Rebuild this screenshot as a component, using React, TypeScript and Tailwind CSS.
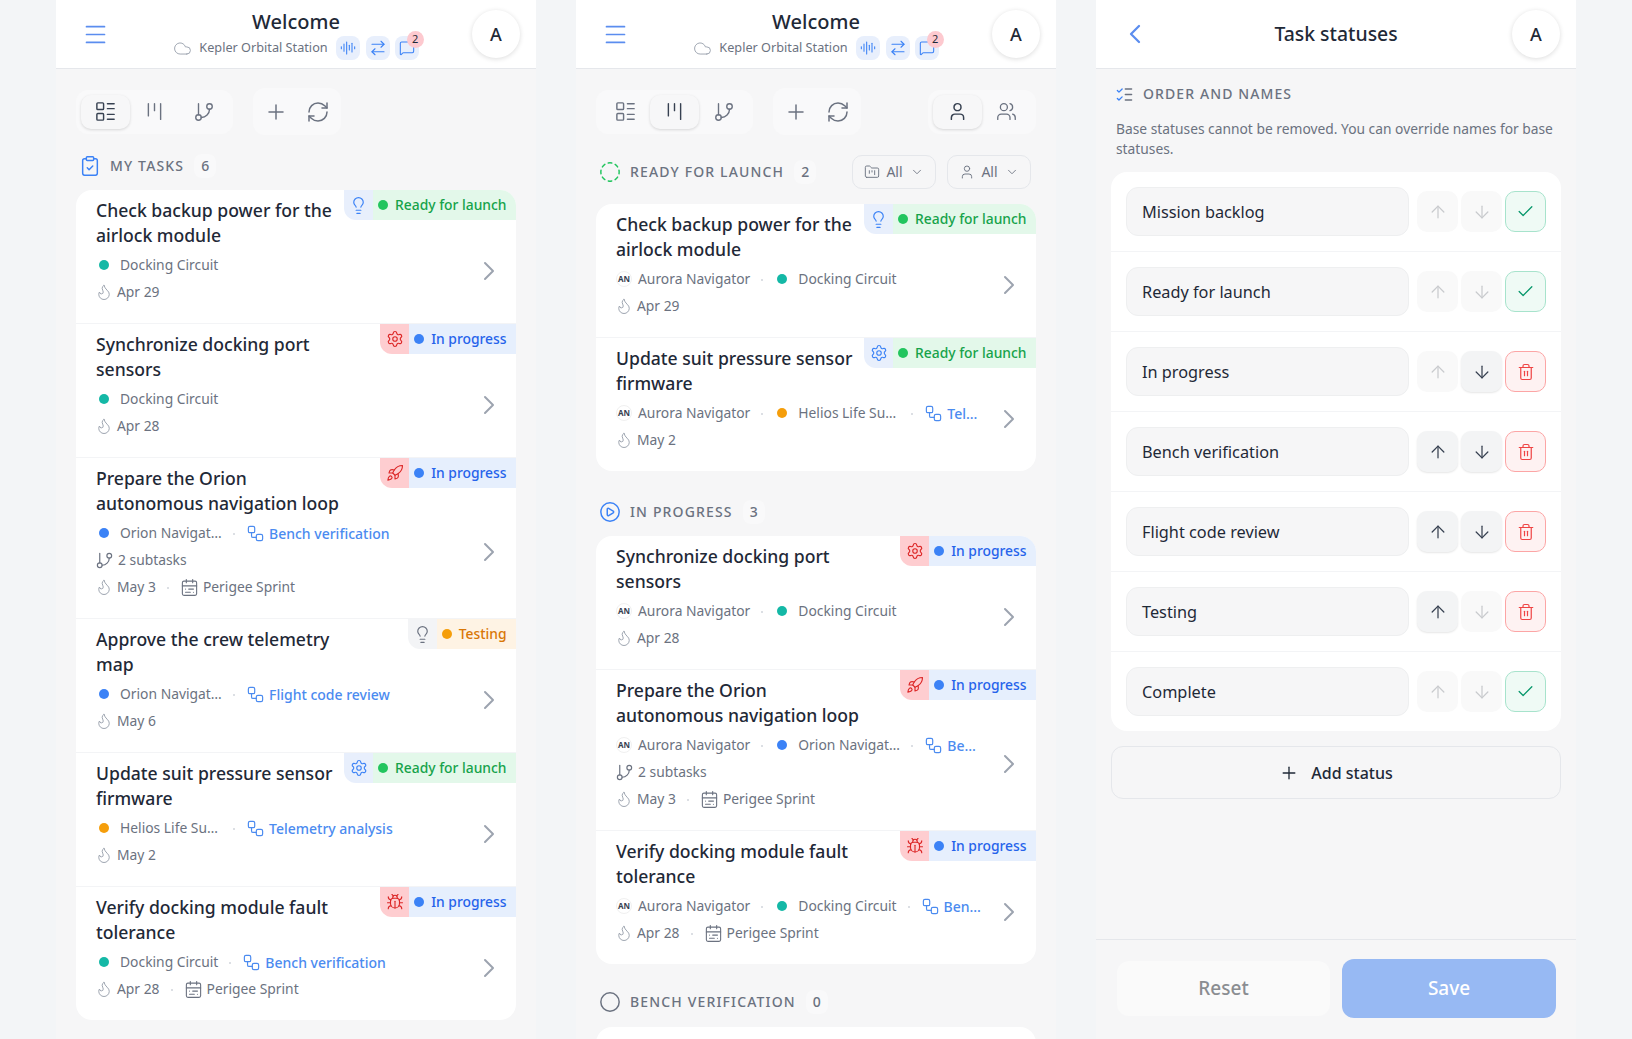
import React from "react";
import {
  ArrowDown, ArrowRightLeft, ArrowUp, AudioLines, Bug, CalendarRange, Check, ChevronDown, ChevronLeft, ChevronRight,
  Circle, CircleDashed, CirclePlay, ClipboardCheck, Cloud, Flame, FolderKanban, GitBranch, Kanban, LayoutList, Lightbulb,
  Menu, MessageSquare, Plus, RefreshCw, Rocket, Settings, Trash2, User, Users, Workflow,
} from "lucide-react";

type Tone = "ready" | "progress" | "testing";
type IconTone = "blue" | "red" | "gray";
type Task = {
  title: string; tone: Tone; icon: React.ElementType; iconTone: IconTone;
  owner?: boolean; dot?: string; project?: string; stage?: string; subtasks?: boolean; date: string; sprint?: boolean;
};

const TEAL = "bg-[#14b8a6]", BLUE = "bg-[#3b82f6]", ORANGE = "bg-[#f59e0b]";

function Dot({ c }: { c: string }) {
  return <span className="flex w-4 shrink-0 justify-center"><span className={`block h-[10px] w-[10px] rounded-full ${c}`} /></span>;
}

function Sep() {
  return <span className="mx-[11px] h-[2px] w-[2px] shrink-0 rounded-full bg-[#d1d5db]" />;
}

function Badge({ t }: { t: Task }) {
  const s = {
    ready: { bg: "bg-[#e3f8ea]", dot: "bg-[#22c55e]", text: "text-[#16a34a]", label: "Ready for launch" },
    progress: { bg: "bg-[#e6effd]", dot: "bg-[#3b82f6]", text: "text-[#2563eb]", label: "In progress" },
    testing: { bg: "bg-[#fef3e4]", dot: "bg-[#f59e0b]", text: "text-[#d97706]", label: "Testing" },
  }[t.tone];
  const i = {
    blue: "bg-[#e8effc] text-[#3b82f6]",
    red: "bg-[#fecdd0] text-[#dc2626]",
    gray: "bg-[#f3f4f6] text-[#6b7280]",
  }[t.iconTone];
  const Icon = t.icon;
  return (
    <div className="absolute right-0 top-0 flex h-[30px] items-center overflow-hidden rounded-bl-xl text-[13.85px] font-medium">
      <span className={`flex h-full w-[29px] items-center justify-center ${i}`}><Icon size={t.icon === Lightbulb ? 19 : 18} strokeWidth={1.5} /></span>
      <span className={`flex h-full items-center gap-[7px] pl-[5px] pr-[9.5px] ${s.bg} ${s.text}`}>
        <span className={`h-[10px] w-[10px] rounded-full ${s.dot}`} />
        {s.label}
      </span>
    </div>
  );
}

function Row({ t, first, last }: { t: Task; first?: boolean; last?: boolean }) {
  const Stage = t.stage ? (
    <span className="flex shrink-0 items-center gap-[4px] text-sm font-medium text-[#4b8bf0]"><Workflow size={19} strokeWidth={1.5} />{t.stage}</span>
  ) : null;
  const cut = t.project?.endsWith("…");
  return (
    <div className={`relative flex items-center overflow-hidden bg-white pl-5 pr-[11px] ${first ? "rounded-t-2xl" : "border-t border-[#f3f4f6]"} ${last ? "rounded-b-2xl" : ""}`}>
      <Badge t={t} />
      <div className="min-w-0 flex-1 pb-[17px] pt-2">
        <div className="w-[250px] text-[17.6px] font-medium leading-[25px] text-[#1f2937]">{t.title}</div>
        <div className="mt-1 flex h-[27px] items-center whitespace-nowrap text-[13.85px] text-[#6b7280]">
          {t.owner && (
            <>
              <span className="flex items-center gap-[6px]">
                <span className="flex h-4 w-4 items-center justify-center rounded-full border border-[#f0f0f0] text-[8px] font-bold text-[#374151]">AN</span>
                Aurora Navigator
              </span>
              <Sep />
            </>
          )}
          {t.dot && t.project && (
            <span className="flex shrink-0 items-center gap-2"><Dot c={t.dot} /><span className={cut ? "min-w-[102px]" : ""}>{t.project}</span></span>
          )}
          {t.stage && <><Sep />{Stage}</>}
        </div>
        {t.subtasks && (
          <div className="-ml-[1px] flex h-[27px] items-center gap-[4px] text-[13.85px] text-[#6b7280]">
            <GitBranch size={19} strokeWidth={1.5} />2 subtasks
          </div>
        )}
        <div className="-ml-[1px] flex h-[27px] items-center text-[13.85px] text-[#6b7280]">
          <span className="flex items-center gap-[4px]"><Flame size={18} strokeWidth={1.3} className="text-[#9ca3af]" />{t.date}</span>
          {t.sprint && (
            <>
              <Sep />
              <span className="flex items-center gap-[4px]"><CalendarRange size={19} strokeWidth={1.4} />Perigee Sprint</span>
            </>
          )}
        </div>
      </div>
      <ChevronRight size={32} strokeWidth={1.5} className="mt-[28px] shrink-0 text-[#9ca3af]" />
    </div>
  );
}

function Avatar() {
  return (
    <div className="flex h-12 w-12 shrink-0 items-center justify-center rounded-full bg-white text-lg font-medium text-[#1f2937] shadow-[0_1px_5px_rgba(0,0,0,0.14)]">A</div>
  );
}

function Header() {
  return (
    <header className="flex h-[69px] shrink-0 items-center border-b border-[#e5e7eb] bg-white pl-[26px] pr-4">
      <span className="w-[38px] shrink-0"><Menu size={27} strokeWidth={1.5} className="text-[#5b8def]" /></span>
      <div className="flex flex-1 flex-col items-center pt-[2px]">
        <div className="text-xl font-medium leading-[26px] text-[#1f2937]">Welcome</div>
        <div className="flex h-[26px] items-center text-[12.7px] text-[#6b7280]">
          <Cloud size={19} strokeWidth={1.2} className="mr-[7px] text-[#9ca3af]" />
          Kepler Orbital Station
          <span className="ml-2 flex h-6 w-6 items-center justify-center rounded-lg bg-[#e8effc] text-[#3b82f6]"><AudioLines size={16} strokeWidth={1.6} /></span>
          <span className="ml-[6px] flex h-6 w-6 items-center justify-center rounded-lg bg-[#e8effc] text-[#3b82f6]"><ArrowRightLeft size={18} strokeWidth={1.5} /></span>
          <span className="relative ml-[5px] flex h-6 w-6 items-center justify-center rounded-lg bg-[#e8effc] text-[#3b82f6]">
            <MessageSquare size={16} strokeWidth={1.6} />
            <span className="absolute -right-[5px] -top-[5px] flex h-[17px] w-[17px] items-center justify-center rounded-full bg-[#fdc9cf] text-[11px] text-[#1f2937]">2</span>
          </span>
        </div>
      </div>
      <Avatar />
    </header>
  );
}

function Tab({ active, children }: { active?: boolean; children: React.ReactNode }) {
  return (
    <span className={`flex h-[34px] w-[49px] items-center justify-center rounded-[10px] ${active ? "bg-[#f7f7f8] text-[#374151] shadow-[0_1px_3px_rgba(0,0,0,0.14)]" : "text-[#6b7280]"}`}>{children}</span>
  );
}

function Toolbar({ tab, people }: { tab: number; people?: boolean }) {
  return (
    <div className="mt-[19px] flex shrink-0 items-center px-5">
      <div className="flex h-11 items-center rounded-xl bg-[#f9f9fa] px-[5px]">
        <Tab active={tab === 0}><LayoutList size={23} strokeWidth={1.5} /></Tab>
        <Tab active={tab === 1}><Kanban size={21} strokeWidth={1.6} /></Tab>
        <Tab><GitBranch size={22} strokeWidth={1.5} /></Tab>
      </div>
      <div className="ml-5 flex h-[47px] w-[88px] items-center justify-center gap-[18px] rounded-xl bg-[#f9f9fa] text-[#6b7280]">
        <Plus size={24} strokeWidth={1.5} />
        <RefreshCw size={24} strokeWidth={1.5} />
      </div>
      {people && (
        <div className="ml-auto flex h-11 items-center rounded-xl bg-[#f9f9fa] px-[5px]">
          <Tab active><User size={21} strokeWidth={1.7} /></Tab>
          <Tab><Users size={21} strokeWidth={1.5} /></Tab>
        </div>
      )}
    </div>
  );
}

function SectionTitle({ icon, label, n, children }: { icon: React.ReactNode; label: string; n: number; children?: React.ReactNode }) {
  return (
    <div className="flex items-center pl-[3px]">
      {icon}
      <span className="ml-[9px] text-sm font-medium uppercase tracking-[1.15px] text-[#6b7280]">{label}</span>
      <span className="ml-[10px] flex h-6 w-[22px] items-center justify-center rounded-lg bg-[#f9f9fa] text-sm font-medium text-[#6b7280]">{n}</span>
      {children}
    </div>
  );
}

function Filter({ icon }: { icon: React.ReactNode }) {
  return (
    <span className="flex h-[34px] w-[84px] items-center justify-center rounded-[10px] border border-[#e5e7eb] text-sm text-[#6b7280]">
      {icon}
      <span className="ml-[6px]">All</span>
      <ChevronDown size={14} strokeWidth={1.5} className="ml-[7px]" />
    </span>
  );
}

const FIRST: Task[] = [
  { title: "Check backup power for the airlock module", tone: "ready", icon: Lightbulb, iconTone: "blue", dot: TEAL, project: "Docking Circuit", date: "Apr 29" },
  { title: "Synchronize docking port sensors", tone: "progress", icon: Settings, iconTone: "red", dot: TEAL, project: "Docking Circuit", date: "Apr 28" },
  { title: "Prepare the Orion autonomous navigation loop", tone: "progress", icon: Rocket, iconTone: "red", dot: BLUE, project: "Orion Navigat…", stage: "Bench verification", subtasks: true, date: "May 3", sprint: true },
  { title: "Approve the crew telemetry map", tone: "testing", icon: Lightbulb, iconTone: "gray", dot: BLUE, project: "Orion Navigat…", stage: "Flight code review", date: "May 6" },
  { title: "Update suit pressure sensor firmware", tone: "ready", icon: Settings, iconTone: "blue", dot: ORANGE, project: "Helios Life Su…", stage: "Telemetry analysis", date: "May 2" },
  { title: "Verify docking module fault tolerance", tone: "progress", icon: Bug, iconTone: "red", dot: TEAL, project: "Docking Circuit", stage: "Bench verification", date: "Apr 28", sprint: true },
];

const READY: Task[] = [
  { title: "Check backup power for the airlock module", tone: "ready", icon: Lightbulb, iconTone: "blue", owner: true, dot: TEAL, project: "Docking Circuit", date: "Apr 29" },
  { title: "Update suit pressure sensor firmware", tone: "ready", icon: Settings, iconTone: "blue", owner: true, dot: ORANGE, project: "Helios Life Su…", stage: "Tel…", date: "May 2" },
];

const PROGRESS: Task[] = [
  { title: "Synchronize docking port sensors", tone: "progress", icon: Settings, iconTone: "red", owner: true, dot: TEAL, project: "Docking Circuit", date: "Apr 28" },
  { title: "Prepare the Orion autonomous navigation loop", tone: "progress", icon: Rocket, iconTone: "red", owner: true, dot: BLUE, project: "Orion Navigat…", stage: "Be…", subtasks: true, date: "May 3", sprint: true },
  { title: "Verify docking module fault tolerance", tone: "progress", icon: Bug, iconTone: "red", owner: true, dot: TEAL, project: "Docking Circuit", stage: "Ben…", date: "Apr 28", sprint: true },
];

function Card({ tasks }: { tasks: Task[] }) {
  return <div>{tasks.map((t, i) => <Row key={t.title} t={t} first={i === 0} last={i === tasks.length - 1} />)}</div>;
}

function Arrow({ up, on }: { up?: boolean; on?: boolean }) {
  const I = up ? ArrowUp : ArrowDown;
  return (
    <span className={`flex h-[41px] w-[41px] items-center justify-center rounded-[10px] ${on ? "bg-[#f3f4f5] text-[#374151] shadow-[0_1px_2px_rgba(0,0,0,0.1)]" : "bg-[#f9f9f9] text-[#c9cbce]"}`}>
      <I size={20} strokeWidth={1.5} />
    </span>
  );
}

const STATUSES: [string, boolean, boolean, boolean][] = [
  ["Mission backlog", false, false, false],
  ["Ready for launch", false, false, false],
  ["In progress", false, true, true],
  ["Bench verification", true, true, true],
  ["Flight code review", true, true, true],
  ["Testing", true, false, true],
  ["Complete", false, false, false],
];

function StatusRow({ s, first }: { s: [string, boolean, boolean, boolean]; first: boolean }) {
  return (
    <div className={`flex items-center pl-[15px] pr-[15px] ${first ? "h-[79px]" : "h-[80px] border-t border-[#f3f4f6]"}`}>
      <div className="flex h-[49px] w-[283px] items-center rounded-xl border border-[#eeeff0] bg-[#f6f6f7] pl-[15px] pt-[1px] text-[16.3px] text-[#1f2937]">{s[0]}</div>
      <div className="ml-2 flex gap-[3px]">
        <Arrow up on={s[1]} />
        <Arrow on={s[2]} />
        {s[3] ? (
          <span className="flex h-[41px] w-[41px] items-center justify-center rounded-[10px] border border-[#fca5a5] bg-[#fef2f2] text-[#ef4444]"><Trash2 size={18} strokeWidth={1.6} /></span>
        ) : (
          <span className="flex h-[41px] w-[41px] items-center justify-center rounded-[10px] border border-[#a7e3cc] bg-[#effaf5] text-[#059669]"><Check size={19} strokeWidth={1.6} /></span>
        )}
      </div>
    </div>
  );
}

export default function App() {
  return (
    <div className="flex h-[1039px] gap-10 overflow-hidden bg-[#f3f5f7] pl-14 text-[#1f2937] [font-family:'Noto_Sans',sans-serif]">
      <section className="flex h-full w-[480px] flex-col overflow-hidden bg-[#f6f6f7]">
        <Header />
        <Toolbar tab={0} />
        <div className="mt-[19px] px-5">
          <SectionTitle icon={<ClipboardCheck size={22} strokeWidth={1.6} className="text-[#3b82f6]" />} label="My tasks" n={6} />
          <div className="mt-3"><Card tasks={FIRST} /></div>
        </div>
      </section>

      <section className="flex h-full w-[480px] flex-col overflow-hidden bg-[#f6f6f7]">
        <Header />
        <Toolbar tab={1} people />
        <div className="mt-5 px-5">
          <SectionTitle icon={<CircleDashed size={22} strokeWidth={1.6} className="text-[#22c55e]" />} label="Ready for launch" n={2}>
            <div className="ml-auto flex gap-[11px] pr-[5px]">
              <Filter icon={<FolderKanban size={16} strokeWidth={1.4} />} />
              <Filter icon={<User size={16} strokeWidth={1.4} />} />
            </div>
          </SectionTitle>
          <div className="mt-[15px]"><Card tasks={READY} /></div>
          <div className="mt-[29px]">
            <SectionTitle icon={<CirclePlay size={22} strokeWidth={1.6} className="text-[#3b82f6]" />} label="In progress" n={3} />
          </div>
          <div className="mt-3"><Card tasks={PROGRESS} /></div>
          <div className="mt-[26px]">
            <SectionTitle icon={<Circle size={22} strokeWidth={1.6} className="text-[#6b7280]" />} label="Bench verification" n={0} />
          </div>
          <div className="mt-[13px] h-16 rounded-t-2xl bg-white" />
        </div>
      </section>

      <section className="flex h-full w-[480px] flex-col overflow-hidden bg-[#f6f6f7]">
        <header className="flex h-[69px] shrink-0 items-center border-b border-[#e5e7eb] bg-white pl-[23px] pr-4">
          <span className="w-[41px] shrink-0"><ChevronLeft size={32} strokeWidth={1.7} className="text-[#5b8def]" /></span>
          <div className="flex-1 text-center text-[19.4px] font-medium text-[#1f2937]">Task statuses</div>
          <Avatar />
        </header>
        <div className="flex min-h-0 flex-1 flex-col px-[15px]">
          <div className="mt-[14px] flex h-[22px] items-center gap-[9px] pl-[4px] text-sm font-medium uppercase tracking-[1.1px] text-[#6b7280]">
            <svg width="19" height="19" viewBox="0 0 24 24" fill="none" strokeWidth="1.7" strokeLinecap="round" strokeLinejoin="round">
              <path d="M13 5h8M13 12h8M13 19h8" stroke="#6b7280" />
              <path d="m3 17 2 2 4-4M3 7l2 2 4-4" stroke="#3b82f6" />
            </svg>
            Order and names
          </div>
          <p className="mt-[14px] pl-[5px] text-[13.8px] leading-5 text-[#6b7280]">Base statuses cannot be removed. You can override names for base statuses.</p>
          <div className="mt-[13px] overflow-hidden rounded-2xl bg-white">
            {STATUSES.map((s, i) => <StatusRow key={s[0]} s={s} first={i === 0} />)}
          </div>
          <div className="mt-[15px] flex h-[53px] items-center justify-center gap-3 rounded-xl border border-[#e5e7eb] text-base font-medium text-[#1f2937]">
            <Plus size={20} strokeWidth={1.6} />
            Add status
          </div>
        </div>
        <footer className="flex h-[100px] shrink-0 items-center gap-3 border-t border-[#e5e7eb] pb-[2px] pl-[21px] pr-5">
          <span className="flex h-[55px] w-[213px] items-center justify-center rounded-xl bg-[#fafafa] text-[19px] font-medium text-[#8a8d91]">Reset</span>
          <span className="flex h-[59px] w-[214px] items-center justify-center rounded-xl bg-[#97b9f3] text-[19px] font-medium text-white">Save</span>
        </footer>
      </section>
    </div>
  );
}
